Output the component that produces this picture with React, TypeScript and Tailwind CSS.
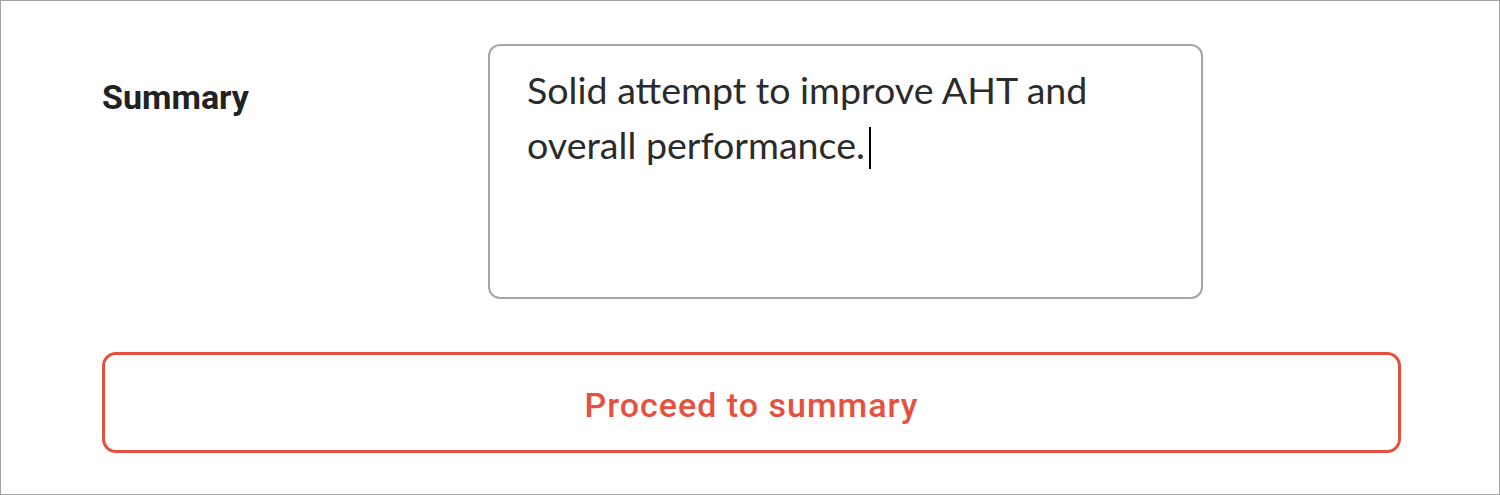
export default function App() {
  return (
    <div className="w-[1500px] h-[495px] bg-white border border-[#a3a3a3] px-[101px] pt-[43px] font-['Roboto',sans-serif]">
      <div className="flex">
        <div className="w-[386px] pt-[33px] text-[34px] leading-[40px] font-bold text-[#222222]">
          Summary
        </div>
        <div className="w-[715px] h-[255px] rounded-[12px] border-2 border-[#a6a6a6] pl-[37px] pr-[30px] pt-[16px] font-['Lato',sans-serif] text-[37.6px] leading-[55px] text-[#2b2b2b]">
          Solid attempt to improve AHT and overall performance.
          <span className="inline-block w-[2px] h-[42px] bg-black align-[-10px] ml-[4px]" />
        </div>
      </div>
      <button className="mt-[53px] w-[1299px] h-[101px] rounded-[14px] border-[3px] border-[#e5513f] flex items-center justify-center pt-[5px] text-[34px] font-medium tracking-[1px] text-[#e5513f]">
        Proceed to summary
      </button>
    </div>
  );
}
